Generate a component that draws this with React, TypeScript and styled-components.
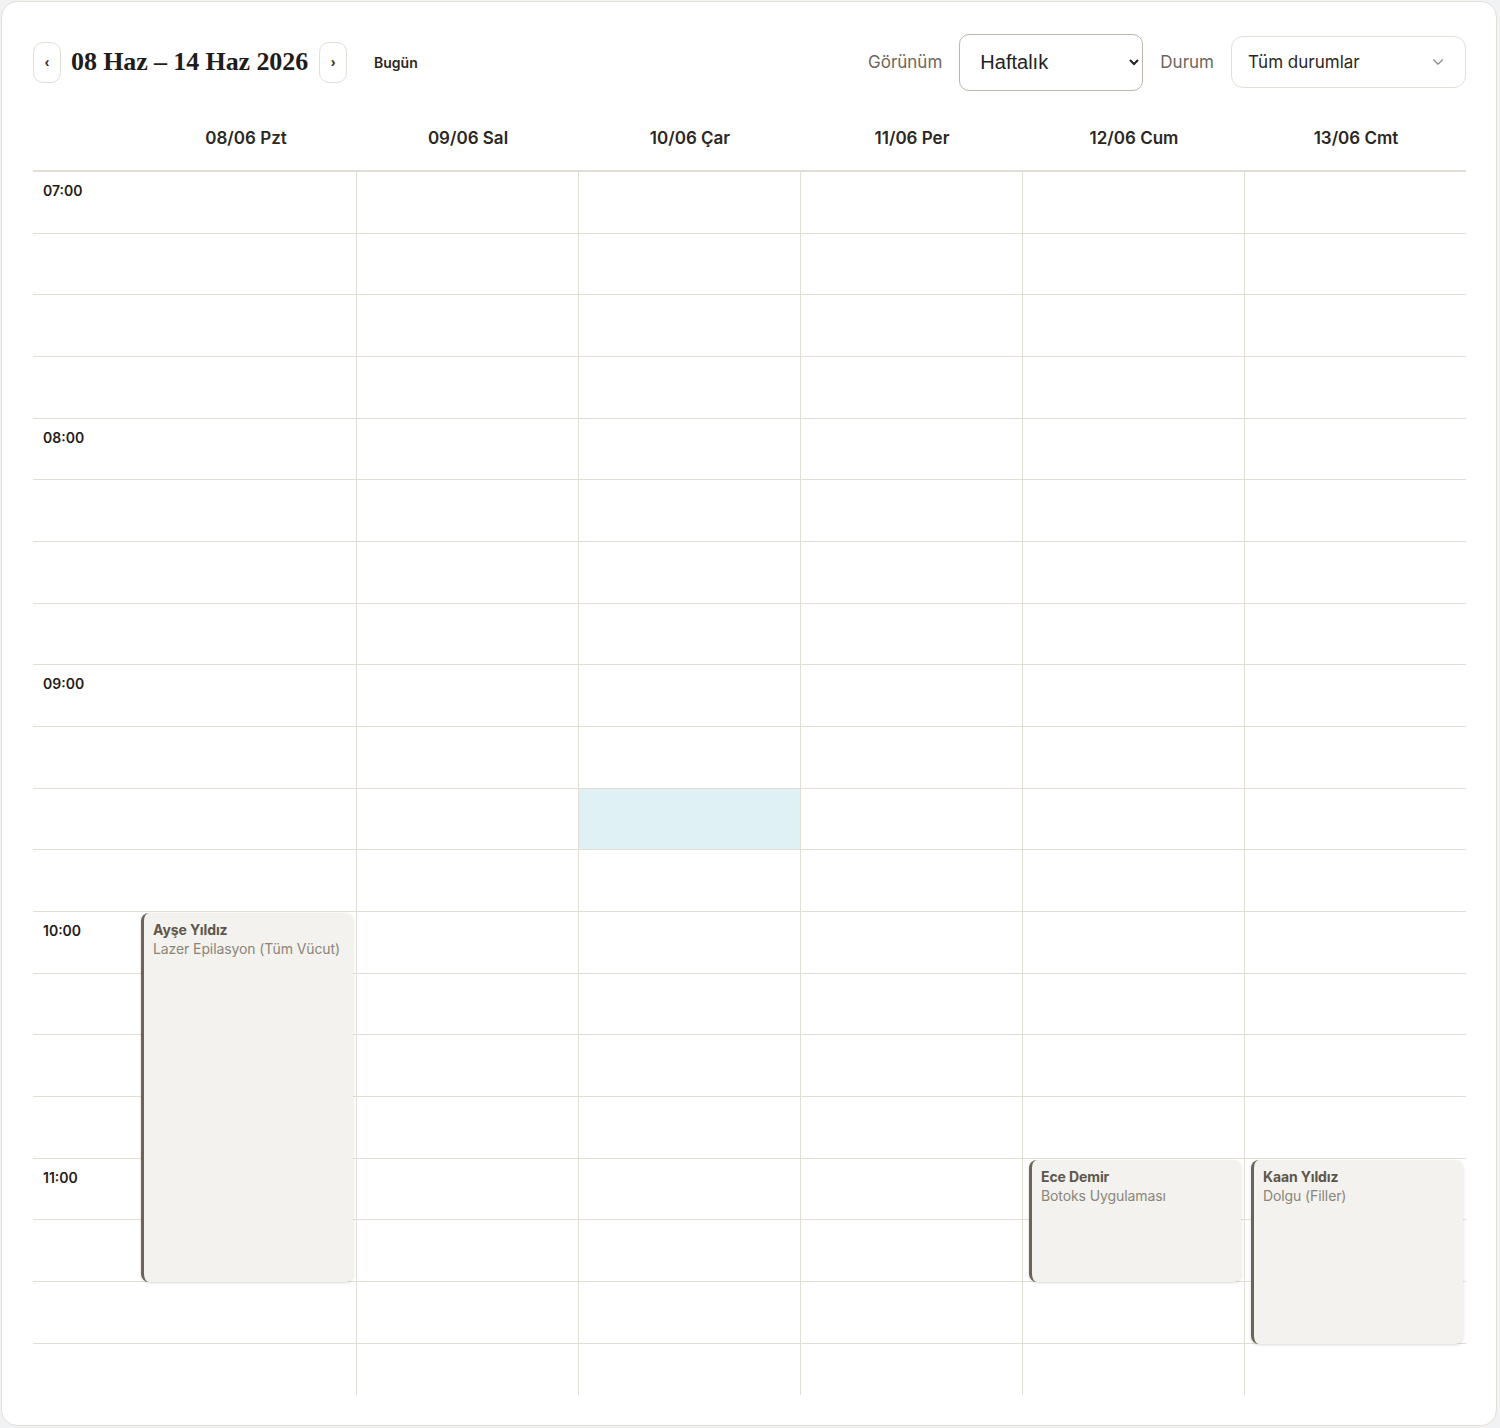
import styled, { createGlobalStyle } from "styled-components";
import { ChevronDown } from "lucide-react";

const SLOT = 61.68;

const GlobalStyle = createGlobalStyle`
  * { box-sizing: border-box; }
  body {
    margin: 0;
    background: #f1f2f4;
    font-family: "Inter", "Liberation Sans", sans-serif;
    color: #2b2722;
  }
`;

const Card = styled.div`
  margin: 1px;
  width: 1496px;
  height: 1425px;
  background: #ffffff;
  border: 1px solid #e4dfd7;
  border-radius: 16px;
  padding: 30px 30px 0 31px;
  overflow: hidden;
`;

const Toolbar = styled.div`
  display: flex;
  align-items: center;
  justify-content: space-between;
  height: 60px;
`;

const Group = styled.div`
  display: flex;
  align-items: center;
`;

const NavButton = styled.button`
  width: 28px;
  height: 41px;
  padding: 0;
  border: 1px solid #e3ded6;
  border-radius: 10px;
  background: #fff;
  color: #2b2722;
  font-family: "Liberation Sans", sans-serif;
  font-size: 14px;
  font-weight: 700;
  display: flex;
  align-items: center;
  justify-content: center;
`;

const Title = styled.h2`
  margin: 0 11px 0 10px;
  font-family: "Liberation Serif", serif;
  font-size: 26px;
  font-weight: 700;
  color: #1f1c19;
  letter-spacing: -0.1px;
`;

const TodayLink = styled.span`
  margin-left: 27px;
  font-size: 14px;
  font-weight: 600;
  color: #2b2722;
`;

const Label = styled.span`
  font-size: 17px;
  color: #6f675c;
  margin: 0 17px;
`;

const NativeSelect = styled.select`
  width: 184px;
  height: 57px;
  padding: 0 4px 0 16px;
  border: 1px solid #bdb6ab;
  border-radius: 10px;
  background: #fff;
  font-family: "Liberation Sans", Arial, sans-serif;
  font-size: 20px;
  color: #222;
`;

const FakeSelect = styled.div`
  width: 235px;
  height: 52px;
  padding: 0 18px 0 16px;
  border: 1px solid #e3ded6;
  border-radius: 12px;
  display: flex;
  align-items: center;
  justify-content: space-between;
  font-size: 17px;
  color: #2b2722;
  svg {
    color: #8d877d;
  }
`;

const Columns = styled.div`
  display: grid;
  grid-template-columns: 102px repeat(6, 222px);
`;

const HeadRow = styled(Columns)`
  margin-top: 26px;
  height: 54px;
  padding-bottom: 12px;
  border-bottom: 2px solid #e2ddd5;
  align-items: center;
`;

const DayName = styled.div`
  text-align: center;
  font-size: 17px;
  font-weight: 600;
  color: #2b2722;
`;

const Body = styled(Columns)`
  height: 1223px;
  overflow: hidden;
`;

const Column = styled.div<{ $line?: boolean }>`
  position: relative;
  border-right: ${(p) => (p.$line ? "1px solid #e2ddd5" : "none")};
`;

const Slot = styled.div<{ $active?: boolean }>`
  height: ${SLOT}px;
  border-bottom: 1px solid #e2ddd5;
  background: ${(p) => (p.$active ? "#dff1f5" : "transparent")};
  padding: 10px 0 0 10px;
  font-size: 14px;
  font-weight: 600;
  color: #1f1c19;
`;

const Event = styled.div`
  position: absolute;
  left: 6px;
  right: 3px;
  background: #f3f2ee;
  border-left: 3px solid #6b6457;
  border-radius: 8px;
  box-shadow: 0 1px 3px rgba(60, 50, 40, 0.18);
  padding: 7px 4px 7px 9px;
  line-height: 19px;
  white-space: nowrap;
  overflow: hidden;
`;

const EventName = styled.div`
  font-size: 14px;
  font-weight: 700;
  color: #5e574c;
  letter-spacing: -0.1px;
`;

const EventService = styled.div`
  font-size: 14px;
  color: #8b857a;
  letter-spacing: -0.1px;
`;

const days = ["08/06 Pzt", "09/06 Sal", "10/06 Çar", "11/06 Per", "12/06 Cum", "13/06 Cmt"];

const times = Array.from({ length: 20 }, (_, i) => (i % 4 === 0 ? `${String(7 + i / 4).padStart(2, "0")}:00` : ""));

const events = [
  { day: 0, start: 12, end: 18, name: "Ayşe Yıldız", service: "Lazer Epilasyon (Tüm Vücut)" },
  { day: 4, start: 16, end: 18, name: "Ece Demir", service: "Botoks Uygulaması" },
  { day: 5, start: 16, end: 19, name: "Kaan Yıldız", service: "Dolgu (Filler)" },
];

// selected slot: Wednesday 09:30
const selected = { day: 2, slot: 10 };

export default function App() {
  return (
    <>
      <GlobalStyle />
      <Card>
        <Toolbar>
          <Group>
            <NavButton>‹</NavButton>
            <Title>08 Haz – 14 Haz 2026</Title>
            <NavButton>›</NavButton>
            <TodayLink>Bugün</TodayLink>
          </Group>
          <Group>
            <Label>Görünüm</Label>
            <NativeSelect defaultValue="week">
              <option value="day">Günlük</option>
              <option value="week">Haftalık</option>
              <option value="month">Aylık</option>
            </NativeSelect>
            <Label>Durum</Label>
            <FakeSelect>
              <span>Tüm durumlar</span>
              <ChevronDown size={18} strokeWidth={1.5} />
            </FakeSelect>
          </Group>
        </Toolbar>

        <HeadRow>
          <div />
          {days.map((d) => (
            <DayName key={d}>{d}</DayName>
          ))}
        </HeadRow>

        <Body>
          <Column>
            {times.map((t, i) => (
              <Slot key={i}>{t}</Slot>
            ))}
          </Column>
          {days.map((d, di) => (
            <Column key={d} $line>
              {times.map((_, i) => (
                <Slot key={i} $active={selected.day === di && selected.slot === i} />
              ))}
              {events
                .filter((e) => e.day === di)
                .map((e) => (
                  <Event
                    key={e.name}
                    style={{ top: e.start * SLOT + 1, height: (e.end - e.start) * SLOT - 1 }}
                  >
                    <EventName>{e.name}</EventName>
                    <EventService>{e.service}</EventService>
                  </Event>
                ))}
            </Column>
          ))}
        </Body>
      </Card>
    </>
  );
}
